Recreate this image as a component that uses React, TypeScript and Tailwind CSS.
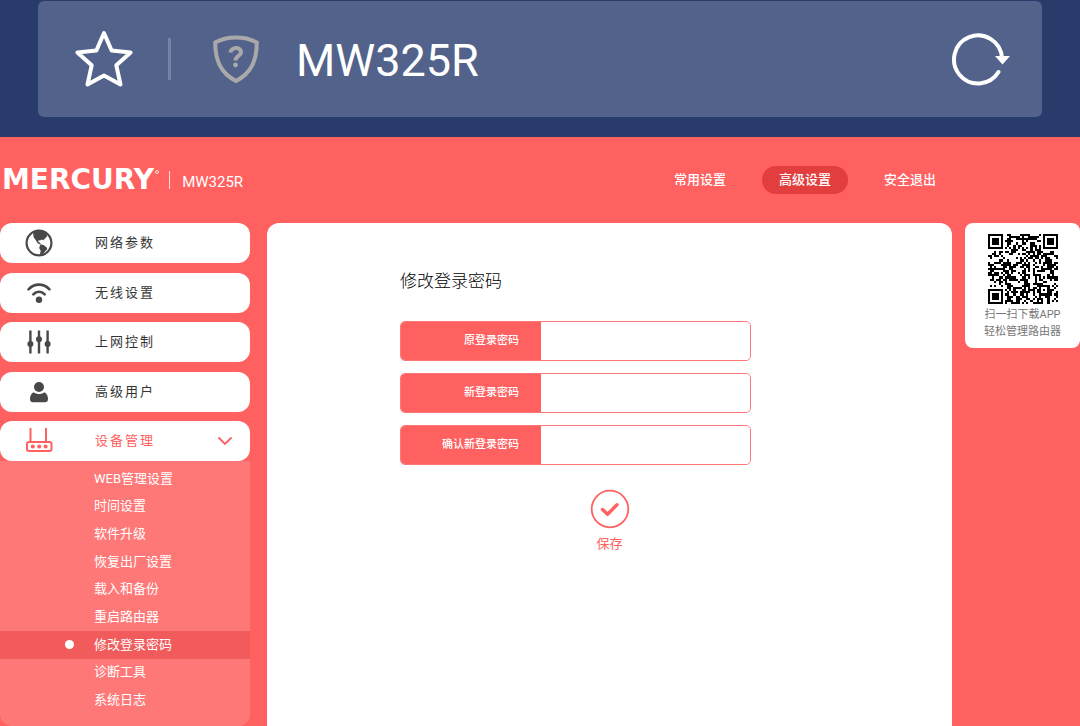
import type { ReactNode } from "react";

const QR_SIZE = 33;

// Finder, timing and alignment patterns are fixed, the rest is filled from a small LCG.
function buildQr(): boolean[][] {
  let seed = 325;
  const next = () => {
    seed = (seed * 1103515245 + 12345) % 2147483648;
    return seed / 2147483648;
  };
  const rows = Array.from({ length: QR_SIZE }, () =>
    Array.from({ length: QR_SIZE }, () => next() > 0.48)
  );

  const corners = [
    [0, 0],
    [QR_SIZE - 7, 0],
    [0, QR_SIZE - 7],
  ];
  for (const [cx, cy] of corners) {
    for (let y = -1; y <= 7; y++) {
      for (let x = -1; x <= 7; x++) {
        const px = cx + x;
        const py = cy + y;
        if (px < 0 || py < 0 || px >= QR_SIZE || py >= QR_SIZE) continue;
        const ring = Math.max(Math.abs(x - 3), Math.abs(y - 3));
        rows[py][px] = ring !== 2 && ring !== 4;
      }
    }
  }

  for (let i = 8; i < QR_SIZE - 8; i++) {
    rows[6][i] = i % 2 === 0;
    rows[i][6] = i % 2 === 0;
  }

  for (let y = -2; y <= 2; y++) {
    for (let x = -2; x <= 2; x++) {
      rows[26 + y][26 + x] = Math.max(Math.abs(x), Math.abs(y)) !== 1;
    }
  }
  return rows;
}

const qrPath = buildQr()
  .map((row, y) => row.map((on, x) => (on ? `M${x} ${y}h1v1h-1z` : "")).join(""))
  .join("");

function GlobeIcon() {
  return (
    <svg viewBox="0 0 28 28" className="size-7" fill="none">
      <circle cx="14" cy="14" r="12.400" stroke="#484848" strokeWidth="2.200" />
      <path
        fill="#484848"
        d="M8.500 2.800c3.500-1.800 8-1.800 11.500 0l1.800 1.700.2 3-2 2-1.800 1.800-1.500-.8-1.700 1-1.500-.3-.2 1.800 1.600.5.8 1.500-1.400.2-2.200-1.700-1.400-2.500-2-2.500-.5-3z"
      />
      <path
        fill="#484848"
        d="M15.500 15.200l3 .8 3.300 2.600.4 1.600-2 2-1.600 2.300-2.600 1.800-1.200-.4.900-4.200-1.600-2.800z"
      />
    </svg>
  );
}

function WifiIcon() {
  return (
    <svg viewBox="0 0 28 28" className="size-7" fill="none" stroke="#484848" strokeLinecap="round">
      <path d="M3.500 10.300c6-6.200 15-6.200 21 0" strokeWidth="2.600" />
      <path d="M8.300 15.300c3.300-3.500 8.100-3.500 11.400 0" strokeWidth="2.600" />
      <circle cx="14" cy="20.800" r="3.200" fill="#484848" stroke="none" />
    </svg>
  );
}

function SlidersIcon() {
  return (
    <svg viewBox="0 0 28 28" className="size-7" fill="#484848">
      <path d="M4.200 2.500h2.400v23H4.200zM12.800 2.500h2.400v23h-2.400zM21.400 2.500h2.400v23h-2.400z" />
      <circle cx="5.400" cy="16" r="3" />
      <circle cx="14" cy="11.200" r="3" />
      <circle cx="22.600" cy="16" r="3" />
    </svg>
  );
}

function UserIcon() {
  return (
    <svg viewBox="0 0 28 28" className="size-7" fill="#484848">
      <circle cx="14" cy="9" r="5" />
      <path d="M8.500 14.200c3.200 2.400 7.800 2.400 11 0 2.300 1.400 3.500 4 3.500 6.800 0 2.300-1.200 3.200-3 3.200H8c-1.800 0-3-.9-3-3.200 0-2.800 1.200-5.400 3.500-6.800z" />
    </svg>
  );
}

function RouterIcon() {
  return (
    <svg viewBox="0 0 28 28" className="size-7" fill="none" stroke="#ff6060" strokeWidth="2">
      <path d="M5.500 1v14M21 1v14" />
      <rect x="2" y="15" width="24.500" height="9" rx="2" />
      <g fill="#ff6060" stroke="none">
        <circle cx="7.800" cy="19.600" r="2" />
        <circle cx="14.200" cy="19.600" r="2" />
        <circle cx="20.600" cy="19.600" r="2" />
      </g>
    </svg>
  );
}

const menu: { label: string; icon: ReactNode; open?: boolean }[] = [
  { label: "网络参数", icon: <GlobeIcon /> },
  { label: "无线设置", icon: <WifiIcon /> },
  { label: "上网控制", icon: <SlidersIcon /> },
  { label: "高级用户", icon: <UserIcon /> },
  { label: "设备管理", icon: <RouterIcon />, open: true },
];

const submenu = [
  "WEB管理设置",
  "时间设置",
  "软件升级",
  "恢复出厂设置",
  "载入和备份",
  "重启路由器",
  "修改登录密码",
  "诊断工具",
  "系统日志",
];

const fields = [
  { id: "old-password", label: "原登录密码" },
  { id: "new-password", label: "新登录密码" },
  { id: "confirm-password", label: "确认新登录密码" },
];

function BrowserBar() {
  return (
    <div className="bg-[#283b6b] px-[38px] pt-px pb-5">
      <div className="flex h-[116px] items-center rounded-md bg-[#53628a] pr-[31px] pl-[36px]">
        <button aria-label="收藏">
          <svg viewBox="0 0 60 60" className="size-[60px]" fill="none" stroke="#fff" strokeWidth="4" strokeLinejoin="round">
            <path d="M30 4l7.600 17.500 19 1.900-14.300 12.800 4.200 19.300L30 46.500l-16.500 9 4.200-19.300L3.400 23.400l19-1.900z" />
          </svg>
        </button>
        <span className="ml-[34px] h-[42px] w-[3px] bg-[#7683a3]" />
        <svg viewBox="0 0 46 50" className="ml-[42px] h-[50px] w-[46px]" fill="none">
          <path
            d="M2.200 8.500C14 1.800 32 1.800 43.800 8.500c0 18-5.500 30.500-20.800 38.500C7.700 39 2.200 26.500 2.200 8.500z"
            stroke="#a9a9a9"
            strokeWidth="4"
          />
          <path d="M17.500 18.500c.8-6 10.500-5.800 10.500-.3 0 4-5.500 3.500-5.500 8.300" stroke="#a9a9a9" strokeWidth="4" />
          <circle cx="22.500" cy="31" r="2.400" fill="#a9a9a9" />
        </svg>
        <span className="ml-[37px] pt-[3px] text-[45px] text-white">MW325R</span>
        <button aria-label="刷新" className="ml-auto">
          <svg viewBox="0 0 60 60" className="size-[60px]" fill="none">
            <path d="M51 29A24 24 0 1 0 47.500 43" stroke="#fff" strokeWidth="4" strokeLinecap="round" />
            <path d="M44 27h15l-7.500 8.500z" fill="#fff" />
          </svg>
        </button>
      </div>
    </div>
  );
}

function Header() {
  return (
    <header className="flex h-[86px] items-center pr-[127px] text-white">
      <div className="flex items-center pl-[2px]">
        <span className="font-['DejaVu_Sans',sans-serif] text-[28px] leading-8 font-bold">MERCURY</span>
        <span className="mb-4 ml-px size-1 rounded-full border border-white/80" />
        <span className="ml-[10px] h-[18px] w-px bg-white/80" />
        <span className="ml-3 pt-1 text-[15px]">MW325R</span>
      </div>
      <nav className="ml-auto flex gap-[19px] text-[13px] font-medium">
        <a href="#basic" className="flex h-7 w-[86px] items-center justify-center">常用设置</a>
        <a href="#advanced" className="flex h-7 w-[86px] items-center justify-center rounded-full bg-[#e33e3e]">
          高级设置
        </a>
        <a href="#logout" className="flex h-7 w-[86px] items-center justify-center">安全退出</a>
      </nav>
    </header>
  );
}

function Sidebar() {
  return (
    <aside className="w-[250px] shrink-0">
      <div className="flex h-[238px] flex-col justify-between">
        {menu.map((item) => (
          <button
            key={item.label}
            className={`flex h-10 items-center rounded-xl bg-white pr-[18px] pl-[25px] text-[13px] tracking-[2px] ${
              item.open ? "text-[#ff6060]" : "text-[#333]"
            }`}
          >
            {item.icon}
            <span className="ml-[42px]">{item.label}</span>
            {item.open && (
              <svg viewBox="0 0 14 8" className="ml-auto h-2 w-[14px]" fill="none" stroke="#ff6060" strokeWidth="1.800">
                <path d="M1 1l6 6 6-6" strokeLinecap="round" />
              </svg>
            )}
          </button>
        ))}
      </div>
      <ul className="grid h-[265px] auto-rows-fr rounded-b-xl bg-[#ff7878] pt-1 pb-3 text-[13px] text-white">
        {submenu.map((label) => {
          const active = label === "修改登录密码";
          return (
            <li key={label}>
              <a href="#device" className={`flex h-full items-center ${active ? "bg-[#f25b5b]" : ""}`}>
                <span className={`ml-[65px] size-[9px] rounded-full ${active ? "bg-white" : ""}`} />
                <span className="ml-5 pb-px">{label}</span>
              </a>
            </li>
          );
        })}
      </ul>
    </aside>
  );
}

function PasswordForm() {
  return (
    <main className="ml-[17px] flex-1 rounded-t-xl bg-white pt-[46px]">
      <form onSubmit={(e) => e.preventDefault()}>
        <div className="ml-[133px] w-[351px]">
          <h1 className="text-[17px] leading-6 font-light text-black">修改登录密码</h1>
          <div className="mt-7 flex h-[144px] flex-col justify-between">
            {fields.map((field) => (
              <div key={field.id} className="flex h-10 overflow-hidden rounded-[5px] border border-[#ff7878]">
                <label
                  htmlFor={field.id}
                  className="flex w-[140px] items-center justify-end bg-[#ff6060] pr-[22px] text-[11px] font-medium text-white"
                >
                  {field.label}
                </label>
                <input id={field.id} type="password" className="min-w-0 flex-1 rounded-r-[4px] bg-white px-3 text-sm outline-none" />
              </div>
            ))}
          </div>
        </div>
        <button type="submit" className="mx-auto mt-6 flex flex-col items-center text-[13px] text-[#ff6060]">
          <svg viewBox="0 0 40 40" className="size-10" fill="none" stroke="#ff6060">
            <circle cx="20" cy="20" r="18.300" strokeWidth="1.800" />
            <path d="M12.500 20.500l5 4.800 9.500-9.500" strokeWidth="3.400" strokeLinecap="round" strokeLinejoin="round" />
          </svg>
          <span className="mt-[5px]">保存</span>
        </button>
      </form>
    </main>
  );
}

export default function App() {
  return (
    <div className="min-h-screen bg-[#ff6060] font-[Roboto,'Noto_Sans_CJK_SC',sans-serif]">
      <BrowserBar />
      <Header />
      <div className="flex">
        <Sidebar />
        <PasswordForm />
        {/* App download */}
        <aside className="ml-[13px] w-[115px] shrink-0 self-start rounded-lg bg-white pt-[11px] pb-2 text-center text-[11px] leading-[17px] text-[#777]">
          <svg viewBox="0 0 33 33" className="mx-auto size-[70px]" shapeRendering="crispEdges" role="img" aria-label="APP">
            <path d={qrPath} fill="#000" />
          </svg>
          <p className="mt-[2px]">扫一扫下载APP</p>
          <p>轻松管理路由器</p>
        </aside>
      </div>
    </div>
  );
}
